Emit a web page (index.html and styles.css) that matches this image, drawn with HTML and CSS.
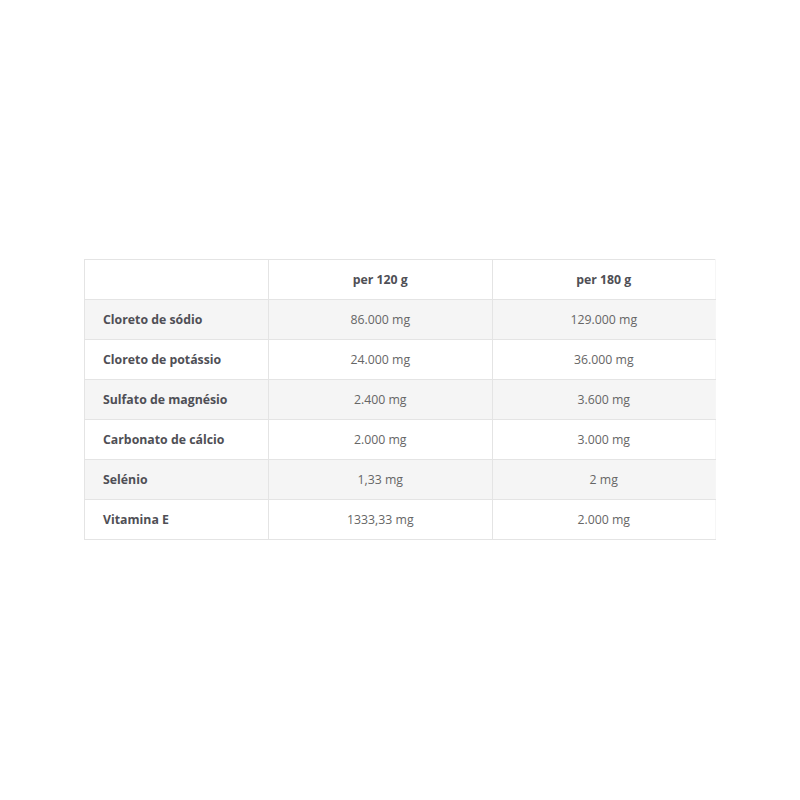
FILE: index.html
```html
<!DOCTYPE html>
<html lang="pt">
<head>
<meta charset="utf-8">
<link rel="stylesheet" href="styles.css">
</head>
<body>
<div class="page">
  <table class="nutri">
    <thead>
      <tr><th class="label"></th><th>per 120 g</th><th>per 180 g</th></tr>
    </thead>
    <tbody>
      <tr class="alt"><th class="label">Cloreto de sódio</th><td>86.000 mg</td><td>129.000 mg</td></tr>
      <tr><th class="label">Cloreto de potássio</th><td>24.000 mg</td><td>36.000 mg</td></tr>
      <tr class="alt"><th class="label">Sulfato de magnésio</th><td>2.400 mg</td><td>3.600 mg</td></tr>
      <tr><th class="label">Carbonato de cálcio</th><td>2.000 mg</td><td>3.000 mg</td></tr>
      <tr class="alt"><th class="label">Selénio</th><td>1,33 mg</td><td>2 mg</td></tr>
      <tr><th class="label">Vitamina E</th><td>1333,33 mg</td><td>2.000 mg</td></tr>
    </tbody>
  </table>
</div>
</body>
</html>
```

FILE: styles.css
```css
html, body {
  margin: 0;
  padding: 0;
  background: #ffffff;
}
.page {
  padding: 259px 0 0 84px;
  font-family: "Open Sans", "Liberation Sans", sans-serif;
}
.nutri {
  border-collapse: collapse;
  width: 632px;
  table-layout: fixed;
  border-left: 1px solid #e4e4e4;
  border-top: 1px solid #e4e4e4;
  border-right: 1px solid #f6f6f6;
  border-bottom: 1px solid #e4e4e4;
}
.nutri th, .nutri td {
  box-sizing: border-box;
  height: 40px;
  padding: 0 18px 1px;
  font-size: 12.3px;
  text-align: center;
  vertical-align: middle;
  border-bottom: 1px solid #e4e4e4;
  border-right: 1px solid #e4e4e4;
}
.nutri th {
  font-weight: 700;
  color: #4f4f55;
}
.nutri th.label {
  width: 184px;
  text-align: left;
}
.nutri td {
  font-weight: 400;
  color: #666666;
}
.nutri tr > :last-child {
  border-right: 1px solid #f6f6f6;
}
.nutri tr.alt {
  background: #f5f5f5;
}
```
